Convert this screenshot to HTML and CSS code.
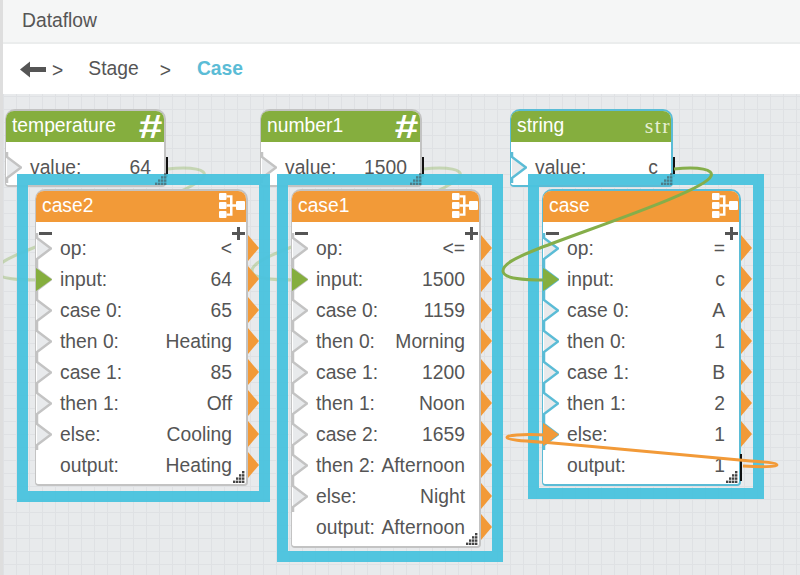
FILE: index.html
```html
<!DOCTYPE html>
<html lang="en">
<head>
  <meta charset="UTF-8" />
  <title>Dataflow</title>
  <link rel="stylesheet" href="styles.css">
</head>
<body>

  <div class="app">
    <div class="title-bar">Dataflow</div>
    <div class="crumbs">
      <svg class="back" width="27" height="17" viewBox="0 0 27 17"><path d="M0 8.5 L10 0.5 V6 H26 V11 H10 V16.5 Z" fill="#555"/></svg>
      <span class="sep first">&gt;</span>
      <span class="crumb">Stage</span>
      <span class="sep">&gt;</span>
      <span class="crumb current">Case</span>
    </div>

    <div class="canvas">
      <svg class="wires" width="797" height="481" viewBox="3 94 797 481">
        <use href="#link" class="wire green faint" x="-507"/>
        <use href="#link" class="wire green faint" x="-251"/>
      </svg>

      <div class="node source pos-temperature">
        <div class="node-head green"><span>temperature</span><span class="hash">#</span></div>
        <div class="source-row"><svg class="port" width="16" height="31" viewBox="0 0 16 31"><path class="notch" d="M1 0 V5 L15 15.5 L1 26 V31"/></svg><span class="key">value:</span><span class="val">64</span></div>
        <i class="caret"></i>
      </div>

      <div class="node source pos-number">
        <div class="node-head green"><span>number1</span><span class="hash">#</span></div>
        <div class="source-row"><svg class="port" width="16" height="31" viewBox="0 0 16 31"><path class="notch" d="M1 0 V5 L15 15.5 L1 26 V31"/></svg><span class="key">value:</span><span class="val">1500</span></div>
        <i class="caret"></i>
      </div>

      <div class="node source picked pos-string">
        <div class="node-head green"><span>string</span><span class="str">str</span></div>
        <div class="source-row"><svg class="port" width="16" height="31" viewBox="0 0 16 31"><path class="notch" d="M1 0 V5 L15 15.5 L1 26 V31"/></svg><span class="key">value:</span><span class="val">c</span></div>
        <i class="caret"></i>
      </div>

      <div class="frame frame-case2"></div>
      <div class="frame frame-case1"></div>
      <div class="frame frame-case0"></div>

      <svg class="grip over over-temperature" width="14" height="12" viewBox="0 0 12 12"><use href="#grip"/></svg>
      <svg class="grip over over-number" width="14" height="12" viewBox="0 0 12 12"><use href="#grip"/></svg>
      <svg class="grip over over-string" width="14" height="12" viewBox="0 0 12 12"><use href="#grip"/></svg>

      <div class="node case pos-case2" id="case2"></div>
      <div class="node case pos-case1" id="case1"></div>
      <div class="node case picked pos-case0" id="case0"></div>

      <svg class="wires" width="797" height="481" viewBox="3 94 797 481">
        <use href="#link" class="wire green"/>
        <path class="wire orange" d="M547 435 C520 434 507 435 507 437.5 C507 440 525 441 547 442.5 C620 449 700 456 745 460.5 C765 462 777 463 777 465 C777 467 760 467 743 466"/>
      </svg>
    </div>
  </div>

  <svg width="0" height="0" class="defs">
    <path id="link" d="M674 169 C700 166 714 170 711 176 C706 190 600 225 540 248 C515 258 503 264 503 271 C503 279 525 280 546 280"/>
    <symbol id="grip" viewBox="0 0 12 12">
      <g fill="#444">
        <rect x="9" y="0" width="2.4" height="2.4"/>
        <rect x="6" y="3.2" width="2.4" height="2.4"/><rect x="9" y="3.2" width="2.4" height="2.4"/>
        <rect x="3" y="6.4" width="2.4" height="2.4"/><rect x="6" y="6.4" width="2.4" height="2.4"/><rect x="9" y="6.4" width="2.4" height="2.4"/>
        <rect x="0" y="9.6" width="2.4" height="2.4"/><rect x="3" y="9.6" width="2.4" height="2.4"/><rect x="6" y="9.6" width="2.4" height="2.4"/><rect x="9" y="9.6" width="2.4" height="2.4"/>
      </g>
    </symbol>
    <symbol id="tree" viewBox="0 0 26 25">
      <g fill="#fff">
        <rect x="0" y="0" width="7.5" height="7" rx="1"/>
        <rect x="0" y="9" width="7.5" height="7" rx="1"/>
        <rect x="0" y="18" width="7.5" height="7" rx="1"/>
        <rect x="17" y="8" width="9" height="9" rx="1"/>
        <path d="M7.5 2.2 H13.5 V11.2 H17 V13.8 H13.5 V22.8 H7.5 V20.5 H11 V13.8 H7.5 V11.2 H11 V4.5 H7.5 Z"/>
      </g>
    </symbol>
  </svg>

  <script>
    const cases = {
      case2: { title: 'case2', rows: [['op:', '<'], ['input:', '64'], ['case 0:', '65'], ['then 0:', 'Heating'], ['case 1:', '85'], ['then 1:', 'Off'], ['else:', 'Cooling'], ['output:', 'Heating']] },
      case1: { title: 'case1', rows: [['op:', '<='], ['input:', '1500'], ['case 0:', '1159'], ['then 0:', 'Morning'], ['case 1:', '1200'], ['then 1:', 'Noon'], ['case 2:', '1659'], ['then 2:', 'Afternoon'], ['else:', 'Night'], ['output:', 'Afternoon']] },
      case0: { title: 'case', rows: [['op:', '='], ['input:', 'c'], ['case 0:', 'A'], ['then 0:', '1'], ['case 1:', 'B'], ['then 1:', '2'], ['else:', '1'], ['output:', '1']] }
    };

    function portIn(id, key) {
      if (key === 'output:') return '<span class="port-gap"></span>';
      if (key === 'input:') return triangle('linked');
      if (key === 'else:' && id === 'case0') return triangle('linked-orange');
      return '<svg class="port" width="16" height="31" viewBox="0 0 16 31"><path class="notch" d="M1 0 V5 L15 15.5 L1 26 V31"/></svg>';
    }

    function triangle(cls) {
      return '<svg class="port" width="16" height="31" viewBox="0 0 16 31">' +
        '<path class="notch" d="M1 0 V5 L15 15.5 L1 26 V31"/><path class="' + cls + '" d="M0 4 L16 15.5 L0 27 Z"/></svg>';
    }

    for (const id in cases) {
      const c = cases[id];
      let html = '<div class="node-head orange"><span>' + c.title + '</span>' +
        '<svg class="tree" width="26" height="25"><use href="#tree"/></svg></div>' +
        '<div class="tools">' +
        '<svg class="minus" width="13" height="3"><rect width="13" height="3" fill="#555"/></svg>' +
        '<svg class="plus" width="13" height="13"><path d="M5 0 H8 V5 H13 V8 H8 V13 H5 V8 H0 V5 H5 Z" fill="#555"/></svg>' +
        '</div>';
      c.rows.forEach(function (r, i) {
        const hideOut = id === 'case0' && i === c.rows.length - 1;
        html += '<div class="row">' + portIn(id, r[0]) +
          '<span class="key">' + r[0] + '</span><span class="val">' + r[1].replace('<', '&lt;') + '</span>' +
          (hideOut ? '' : '<svg class="out" width="12" height="26" viewBox="0 0 12 26"><path d="M0 0 L11 13 L0 26 Z"/></svg>') +
          '</div>';
      });
      html += '<svg class="grip" width="14" height="12" viewBox="0 0 12 12"><use href="#grip"/></svg>';
      if (id === 'case0') html += '<i class="caret tall"></i>';
      document.getElementById(id).innerHTML = html;
    }
  </script>

</body>
</html>
```

FILE: styles.css
```css
* {
  box-sizing: border-box;
}

body {
  margin: 0;
  font-family: "Liberation Sans", Arial, sans-serif;
  font-size: 19.3px;
  color: #555;
  overflow: hidden;
}

.app {
  width: 800px;
  height: 575px;
  display: flex;
  flex-direction: column;
  padding-left: 3px;
  background: #dedede;
  overflow: hidden;
}

.title-bar {
  height: 44px;
  flex: none;
  padding-left: 19px;
  display: flex;
  align-items: center;
  background: #f5f6f6;
  border-bottom: 2px solid #ebeded;
}

.crumbs {
  height: 50px;
  flex: none;
  display: flex;
  align-items: center;
  padding-left: 17px;
  background: #fff;
}

.back {
  margin-right: 3px;
}

.sep {
  margin: 0 26px 0 21px;
  padding-top: 4px;
}

.sep.first {
  margin-left: 2px;
  margin-right: 25px;
}

.crumb.current {
  color: #5bbcd6;
  font-weight: bold;
}

.canvas {
  flex: 1;
  position: relative;
  overflow: hidden;
  background-color: #e8eaec;
  background-image:
    linear-gradient(#dfe1e4 1px, transparent 1px),
    linear-gradient(90deg, #dfe1e4 1px, transparent 1px);
  background-size: 13px 13px;
  background-position: 0 2px;
}

.node, .frame, .wires, .grip {
  position: absolute;
}

/* free canvas: places are relative to the canvas corner */
.pos-temperature { left: 2px; top: 15px; width: 161px; }
.pos-number { left: 257px; top: 15px; width: 162px; }
.pos-string { left: 507px; top: 15px; width: 163px; }
.pos-case2 { left: 32px; top: 95px; width: 213px; }
.pos-case1 { left: 288px; top: 95px; width: 190px; }
.pos-case0 { left: 539px; top: 95px; width: 199px; }
.frame-case2 { left: 14px; top: 80px; width: 253px; height: 328px; }
.frame-case1 { left: 274px; top: 80px; width: 226px; height: 388px; }
.frame-case0 { left: 525px; top: 80px; width: 236px; height: 325px; }
.over-temperature { left: 151px; top: 79px; }
.over-number { left: 406px; top: 79px; }
.over-string { left: 657px; top: 79px; }

.wires {
  left: 0;
  top: 0;
  pointer-events: none;
}

.wire {
  fill: none;
  stroke-width: 3;
}

.wire.green {
  stroke: #85ae4a;
}

.wire.orange {
  stroke: #f29a38;
}

.wire.faint {
  opacity: 0.35;
}

.frame {
  border: 11.5px solid rgba(75, 195, 222, 0.96);
}

.node {
  background: #fff;
  border: 2px solid #c3c3c3;
  border-left-width: 1px;
  border-radius: 10px 10px 4px 4px;
}

.node.picked {
  border-color: #5bbcd6;
}

.source {
  height: 78px;
}

.node-head {
  height: 31px;
  display: flex;
  align-items: center;
  justify-content: space-between;
  padding: 0 6px 2px;
  color: #fff;
  border-radius: 8px 8px 0 0;
}

.node-head.green {
  background: #85ae3e;
}

.node-head.orange {
  background: #f29a38;
  padding-right: 1px;
  padding-bottom: 2px;
}

.hash {
  font-size: 34px;
  line-height: 29px;
  font-weight: bold;
  margin-right: -2px;
  padding-top: 2px;
  transform: scaleX(1.25);
}

.str {
  font-family: "Liberation Serif", serif;
  font-size: 22px;
  letter-spacing: 1.4px;
  margin-right: -6px;
  color: #e6efd4;
}

.source-row, .row {
  display: flex;
  align-items: center;
  height: 31px;
  position: relative;
}

.source-row {
  margin-top: 10px;
}

.source-row .val {
  margin-right: 13px;
}

.port {
  flex: none;
  margin-right: 8px;
}

.port-gap {
  flex: none;
  width: 24px;
}

.notch {
  fill: #e8eaec;
  stroke: #c3c3c3;
  stroke-width: 2.5;
}

.picked .notch {
  stroke: #5bbcd6;
}

.linked {
  fill: #85ae3e;
}

.linked-orange {
  fill: #f29a38;
}

.key {
  flex: none;
}

.val {
  margin-left: auto;
  margin-right: 14px;
  white-space: nowrap;
}

.tree {
  flex: none;
}

.tools {
  height: 11px;
  display: flex;
  justify-content: space-between;
  align-items: flex-start;
  padding: 0 1px 0 3px;
}

.minus {
  margin-top: 10px;
}

.plus {
  margin-top: 5px;
}

.out {
  position: absolute;
  right: -14px;
  top: 2px;
}

.out path {
  fill: #f29a38;
}

.caret {
  position: absolute;
  right: -4px;
  top: 46px;
  width: 2px;
  height: 20px;
  background: #111;
}

.caret.tall {
  top: 263px;
  height: 27px;
  right: -3px;
}

.grip {
  right: 0;
  bottom: 1px;
}

.grip.over {
  right: auto;
  bottom: auto;
  opacity: 0.55;
}

.case {
  padding-bottom: 3px;
}

.defs {
  position: absolute;
}
```
